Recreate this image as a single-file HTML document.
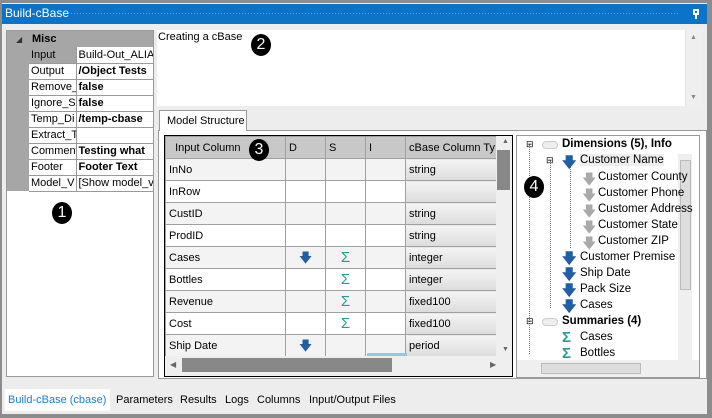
<!DOCTYPE html>
<html><head><style>
*{box-sizing:border-box;margin:0;padding:0}
body{width:712px;height:418px;background:#ededed;font-family:"Liberation Sans",sans-serif;font-size:11px;color:#000;position:relative;overflow:hidden}
.a{position:absolute}
.circ{position:absolute;width:20px;height:22px;border-radius:50%;background:#000;color:#fff;font-size:16px;text-align:center;line-height:22px}
.pg td{height:16px;border-bottom:1px solid #9a9a9a;white-space:nowrap;overflow:hidden;padding-left:2px}
.g{border-collapse:collapse;table-layout:fixed}
.g td,.g th{border:1px solid #a0a0a0;height:22px;line-height:20px;overflow:hidden;white-space:nowrap;padding:0 0 0 3px;font-weight:normal;text-align:left}
.g th{background:#c8c8c8}
.g tr:nth-child(even) td{background:#f3f3f3}
.dd{background:linear-gradient(#f4f4f4,#dcdcdc)!important;border-radius:2px}
.ic{text-align:center!important;padding:0!important;font-weight:bold;font-size:13px}
.tr{position:absolute;white-space:nowrap;font-size:11.5px}
</style></head><body>
<div class="a" style="left:0;top:0;width:712px;height:3px;background:#8c8c8c"></div>
<div class="a" style="left:707px;top:0;width:5px;height:418px;background:#8c8c8c"></div>
<div class="a" style="left:0;top:0;width:2px;height:418px;background:#8c8c8c"></div>
<div class="a" style="left:0;top:414px;width:712px;height:4px;background:#8c8c8c"></div>
<div class="a" style="left:2px;top:4px;width:705px;height:20px;background:#0b74c8"></div>
<div class="a" style="left:5px;top:6px;color:#fff;font-size:12px">Build-cBase</div>
<div class="a" style="left:70px;top:12px;width:610px;height:4px;background-image:radial-gradient(#5b9fd8 0.6px,transparent 0.7px);background-size:3px 3px"></div>
<div class="a" style="left:693px;top:9px;width:6px;height:6px;border:2px solid #fff"></div>
<div class="a" style="left:695px;top:15px;width:2px;height:4px;background:#fff"></div>

<!-- property grid -->
<div class="a" style="left:6px;top:30px;width:148px;height:347px;background:#fff;border:1px solid #999"></div>
<div class="a" style="left:7px;top:31px;width:146px;height:160px;background:#a6a6a6"></div>
<div class="a" style="left:16px;top:35px;font-size:8px;color:#333">◢</div>
<div class="a" style="left:32px;top:33px;font-weight:bold">Misc</div>
<table class="a pg" style="left:29px;top:47px;width:124px;border-collapse:collapse;table-layout:fixed">
<col style="width:47px"><col style="width:77px">
<tr><td style="background:#a6a6a6">Input</td><td style="background:#fff;border-left:1px solid #999">Build-Out_ALIAS</td></tr>
<tr><td style="background:#fff">Output</td><td style="background:#fff;border-left:1px solid #999;font-weight:bold">/Object Tests</td></tr>
<tr><td style="background:#fff">Remove_</td><td style="background:#fff;border-left:1px solid #999;font-weight:bold">false</td></tr>
<tr><td style="background:#fff">Ignore_S</td><td style="background:#fff;border-left:1px solid #999;font-weight:bold">false</td></tr>
<tr><td style="background:#fff">Temp_Di</td><td style="background:#fff;border-left:1px solid #999;font-weight:bold">/temp-cbase</td></tr>
<tr><td style="background:#fff">Extract_T</td><td style="background:#fff;border-left:1px solid #999"></td></tr>
<tr><td style="background:#fff">Comment</td><td style="background:#fff;border-left:1px solid #999;font-weight:bold">Testing what</td></tr>
<tr><td style="background:#fff">Footer</td><td style="background:#fff;border-left:1px solid #999;font-weight:bold">Footer Text</td></tr>
<tr><td style="background:#fff">Model_V</td><td style="background:#fff;border-left:1px solid #999">[Show model_va</td></tr>
</table>
<div class="circ" style="left:52px;top:202px">1</div>

<!-- text area -->
<div class="a" style="left:157px;top:30px;width:544px;height:76px;background:#fff"></div>
<div class="a" style="left:685px;top:30px;width:16px;height:76px;background:#efefef;border-left:1px solid #e0e0e0"></div>
<div class="a" style="left:690px;top:34px;font-size:7px;color:#888">▲</div>
<div class="a" style="left:690px;top:94px;font-size:7px;color:#888">▼</div>
<div class="a" style="left:158px;top:31px">Creating a cBase</div>
<div class="circ" style="left:251px;top:34px">2</div>

<!-- tab -->
<div class="a" style="left:158px;top:130px;width:549px;height:249px;border:1px solid #999;background:#fff"></div>
<div class="a" style="left:159px;top:110px;width:88px;height:21px;border:1px solid #999;border-bottom:none;background:#fff;padding:4px 0 0 7px">Model Structure</div>

<!-- grid -->
<div class="a" style="left:164px;top:135px;width:349px;height:242px;border:1px solid #000;background:#fff;overflow:hidden">
<table class="g" style="width:331px">
<col style="width:120px"><col style="width:40px"><col style="width:40px"><col style="width:40px"><col style="width:91px">
<tr><th>&nbsp; Input Column</th><th>D</th><th>S</th><th>I</th><th>cBase Column Ty</th></tr>
<tr><td>InNo</td><td></td><td></td><td></td><td class="dd">string</td></tr>
<tr><td>InRow</td><td></td><td></td><td></td><td class="dd"></td></tr>
<tr><td>CustID</td><td></td><td></td><td></td><td class="dd">string</td></tr>
<tr><td>ProdID</td><td></td><td></td><td></td><td class="dd">string</td></tr>
<tr><td>Cases</td><td class="ic" style="color:#1f5fa5">🡇</td><td class="ic" style="color:#2a9a94;font-size:15px">Σ</td><td></td><td class="dd">integer</td></tr>
<tr><td>Bottles</td><td></td><td class="ic" style="color:#2a9a94;font-size:15px">Σ</td><td></td><td class="dd">integer</td></tr>
<tr><td>Revenue</td><td></td><td class="ic" style="color:#2a9a94;font-size:15px">Σ</td><td></td><td class="dd">fixed100</td></tr>
<tr><td>Cost</td><td></td><td class="ic" style="color:#2a9a94;font-size:15px">Σ</td><td></td><td class="dd">fixed100</td></tr>
<tr><td>Ship Date</td><td class="ic" style="color:#1f5fa5">🡇</td><td></td><td></td><td class="dd">period</td></tr>
<tr><td></td><td></td><td></td><td></td><td></td></tr>
</table>
<div class="a" style="left:331px;top:0;width:16px;height:222px;background:#efefef"></div>
<div class="a" style="left:337px;top:2px;font-size:7px;color:#666">▲</div>
<div class="a" style="left:332px;top:14px;width:13px;height:40px;background:#888"></div>
<div class="a" style="left:337px;top:210px;font-size:7px;color:#666">▼</div>
<div class="a" style="left:0;top:220px;width:347px;height:20px;background:#efefef"></div>
<div class="a" style="left:5px;top:224px;font-size:8px;color:#666">◀</div>
<div class="a" style="left:17px;top:222px;width:210px;height:14px;background:#888"></div>
<div class="a" style="left:325px;top:224px;font-size:8px;color:#666">▶</div>
<div class="a" style="left:202px;top:217px;width:40px;height:3px;background:#8ecae6"></div>
</div>
<div class="circ" style="left:249px;top:139px">3</div>

<!-- tree -->
<div class="a" style="left:516px;top:135px;width:184px;height:243px;border:1px solid #999;background:#fff;overflow:hidden">
<div class="a" style="left:161px;top:18px;width:14px;height:206px;background:#efefef"></div>
<div class="a" style="left:163px;top:24px;width:11px;height:130px;background:#ddd;border:1px solid #bbb"></div>
<div class="a" style="left:0;top:224px;width:184px;height:18px;background:#efefef"></div>
<div class="a" style="left:24px;top:227px;width:100px;height:11px;background:#ddd;border:1px solid #bbb"></div>
<div class="a" style="left:12px;top:8px;width:1px;height:210px;border-left:1px dotted #777"></div>
<div class="a" style="left:33px;top:24px;width:1px;height:148px;border-left:1px dotted #777"></div>
<div class="a" style="left:53px;top:28px;width:1px;height:84px;border-left:1px dotted #777"></div>
<span class="tr" style="left:9px;top:3px;font-size:9px">⊟</span>
<div class="a" style="left:25px;top:5px;width:16px;height:8px;border-radius:4px;background:#eee;border:1px solid #ccc"></div>
<span class="tr" style="left:45px;top:2px;font-weight:bold">Dimensions (5), Info</span>
<span class="tr" style="left:29px;top:19px;font-size:9px">⊟</span>
<span class="tr" style="left:45px;top:16px;color:#1f5fa5;font-weight:bold;font-size:14px">🡇</span>
<span class="tr" style="left:63px;top:18px;background:#eee">Customer Name</span>
<span class="tr" style="left:65px;top:33px;color:#aaa;font-size:14px">🡇</span><span class="tr" style="left:81px;top:35px">Customer County</span>
<span class="tr" style="left:65px;top:49px;color:#aaa;font-size:14px">🡇</span><span class="tr" style="left:81px;top:51px">Customer Phone</span>
<span class="tr" style="left:65px;top:65px;color:#aaa;font-size:14px">🡇</span><span class="tr" style="left:81px;top:67px">Customer Address</span>
<span class="tr" style="left:65px;top:81px;color:#aaa;font-size:14px">🡇</span><span class="tr" style="left:81px;top:83px">Customer State</span>
<span class="tr" style="left:65px;top:97px;color:#aaa;font-size:14px">🡇</span><span class="tr" style="left:81px;top:99px">Customer ZIP</span>
<span class="tr" style="left:45px;top:112px;color:#1f5fa5;font-size:14px;font-weight:bold">🡇</span><span class="tr" style="left:63px;top:115px">Customer Premise</span>
<span class="tr" style="left:45px;top:128px;color:#1f5fa5;font-size:14px;font-weight:bold">🡇</span><span class="tr" style="left:63px;top:131px">Ship Date</span>
<span class="tr" style="left:45px;top:144px;color:#1f5fa5;font-size:14px;font-weight:bold">🡇</span><span class="tr" style="left:63px;top:147px">Pack Size</span>
<span class="tr" style="left:45px;top:160px;color:#1f5fa5;font-size:14px;font-weight:bold">🡇</span><span class="tr" style="left:63px;top:163px">Cases</span>
<span class="tr" style="left:9px;top:180px;font-size:9px">⊟</span>
<div class="a" style="left:25px;top:182px;width:16px;height:8px;border-radius:4px;background:#eee;border:1px solid #ccc"></div>
<span class="tr" style="left:45px;top:179px;font-weight:bold">Summaries (4)</span>
<span class="tr" style="left:45px;top:193px;color:#2a9a94;font-size:15px;font-weight:bold">Σ</span><span class="tr" style="left:63px;top:195px">Cases</span>
<span class="tr" style="left:45px;top:209px;color:#2a9a94;font-size:15px;font-weight:bold">Σ</span><span class="tr" style="left:63px;top:211px">Bottles</span>
</div>
<div class="circ" style="left:524px;top:176px">4</div>

<!-- bottom tabs -->
<div class="a" style="left:5px;top:389px;width:105px;height:22px;background:#fff"></div>
<div class="a" style="left:8px;top:394px;color:#1a7fd4">Build-cBase (cbase)</div>
<div class="a" style="left:116px;top:394px">Parameters</div>
<div class="a" style="left:180px;top:394px">Results</div>
<div class="a" style="left:225px;top:394px">Logs</div>
<div class="a" style="left:257px;top:394px">Columns</div>
<div class="a" style="left:309px;top:394px">Input/Output Files</div>
</body></html>
